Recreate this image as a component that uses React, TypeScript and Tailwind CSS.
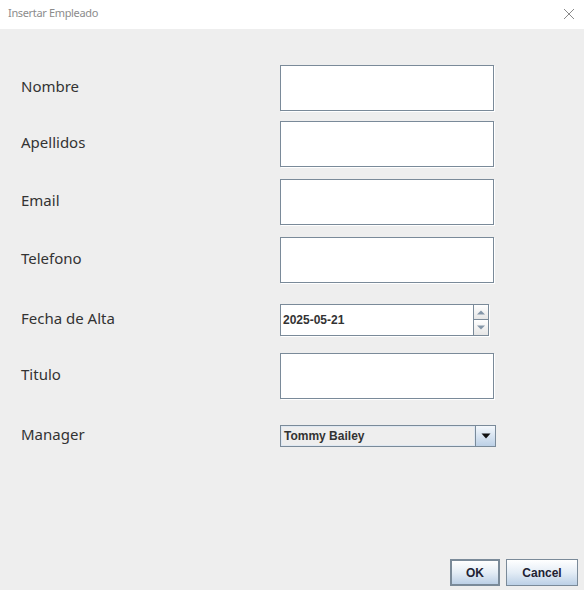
import React from "react";

const labelCls =
  "w-[259px] shrink-0 text-[15px] text-[#333333] leading-none -translate-y-[2px]";
const labelFont = { fontFamily: '"Noto Sans", sans-serif' } as const;

function TextField() {
  return (
    <div className="w-[214px] h-[46px] bg-white border border-[#7a8a99] shadow-[1px_1px_0_#ffffff]" />
  );
}

function Row({
  label,
  mt,
  children,
}: {
  label: string;
  mt: string;
  children: React.ReactNode;
}) {
  return (
    <div className={`flex items-center ${mt}`}>
      <div className={labelCls} style={labelFont}>
        {label}
      </div>
      {children}
    </div>
  );
}

export default function App() {
  const boldFont = { fontFamily: '"Liberation Sans", Arial, sans-serif' } as const;
  return (
    <div className="w-[584px] h-[590px] flex flex-col bg-[#eeeeee] overflow-hidden">
      {/* title bar */}
      <div className="h-[29px] shrink-0 bg-white flex items-center justify-between pl-[8px] pr-[9px]">
        <span
          className="text-[11px] text-[#8c8c8c] tracking-[-0.35px] -translate-y-[1px]"
          style={{ fontFamily: '"Noto Sans", sans-serif' }}
        >
          Insertar Empleado
        </span>
        <svg width="12" height="12" viewBox="0 0 12 12" className="-translate-y-[1px]">
          <path d="M1 1 L11 11 M11 1 L1 11" stroke="#8a8a8a" strokeWidth="1" fill="none" />
        </svg>
      </div>

      {/* form */}
      <div className="flex-1 flex flex-col pl-[21px] pt-[36px]">
        <Row label="Nombre" mt="mt-0">
          <TextField />
        </Row>
        <Row label="Apellidos" mt="mt-[10px]">
          <TextField />
        </Row>
        <Row label="Email" mt="mt-[12px]">
          <TextField />
        </Row>
        <Row label="Telefono" mt="mt-[12px]">
          <TextField />
        </Row>
        <Row label="Fecha de Alta" mt="mt-[21px]">
          <div className="flex h-[32px] shadow-[1px_1px_0_#ffffff]">
            <div
              className="w-[193px] h-[32px] bg-white border border-[#7a8a99] border-r-0 flex items-center pl-[2px] text-[12px] font-bold text-[#333333]"
              style={boldFont}
            >
              2025-05-21
            </div>
            <div className="w-[16px] h-[32px] flex flex-col">
              <div className="h-[16px] border border-[#7a8a99] bg-gradient-to-b from-white to-[#e6e6e6] flex items-center justify-center">
                <svg width="8" height="5" viewBox="0 0 8 5">
                  <path d="M0 4.5 L4 0.5 L8 4.5 Z" fill="#8496a8" />
                </svg>
              </div>
              <div className="h-[16px] border border-t-0 border-[#7a8a99] bg-gradient-to-b from-white to-[#e6e6e6] flex items-center justify-center">
                <svg width="8" height="5" viewBox="0 0 8 5">
                  <path d="M0 0.5 L8 0.5 L4 4.5 Z" fill="#8496a8" />
                </svg>
              </div>
            </div>
          </div>
        </Row>
        <Row label="Titulo" mt="mt-[17px]">
          <TextField />
        </Row>
        <Row label="Manager" mt="mt-[26px]">
          <div className="w-[216px] h-[22px] border border-[#7a8a99] flex">
            <div className="flex-1 border border-[#dfe8f2] bg-[#eeeeee] flex items-center pl-[2px]">
              <span className="text-[12px] font-bold text-[#333333]" style={boldFont}>
                Tommy Bailey
              </span>
            </div>
            <div className="w-[20px] border-l border-[#7a8a99] bg-gradient-to-b from-[#f4f8fc] to-[#bcd0e6] flex items-center justify-center">
              <svg width="10" height="6" viewBox="0 0 10 6">
                <path d="M0.5 0.5 L9.5 0.5 L5 5.5 Z" fill="#111111" />
              </svg>
            </div>
          </div>
        </Row>
      </div>

      {/* buttons */}
      <div className="flex justify-end gap-[6px] pr-[6px] pb-[4px]">
        <button
          className="w-[50px] h-[27px] border-2 border-[#7a8a99] bg-gradient-to-b from-white via-[#e4edf6] to-[#bcd0e6] text-[12px] font-bold text-[#222233]"
          style={boldFont}
        >
          OK
        </button>
        <button
          className="w-[72px] h-[27px] border border-[#7a8a99] bg-gradient-to-b from-white via-[#e4edf6] to-[#bcd0e6] text-[12px] font-bold text-[#222233]"
          style={boldFont}
        >
          Cancel
        </button>
      </div>
    </div>
  );
}
